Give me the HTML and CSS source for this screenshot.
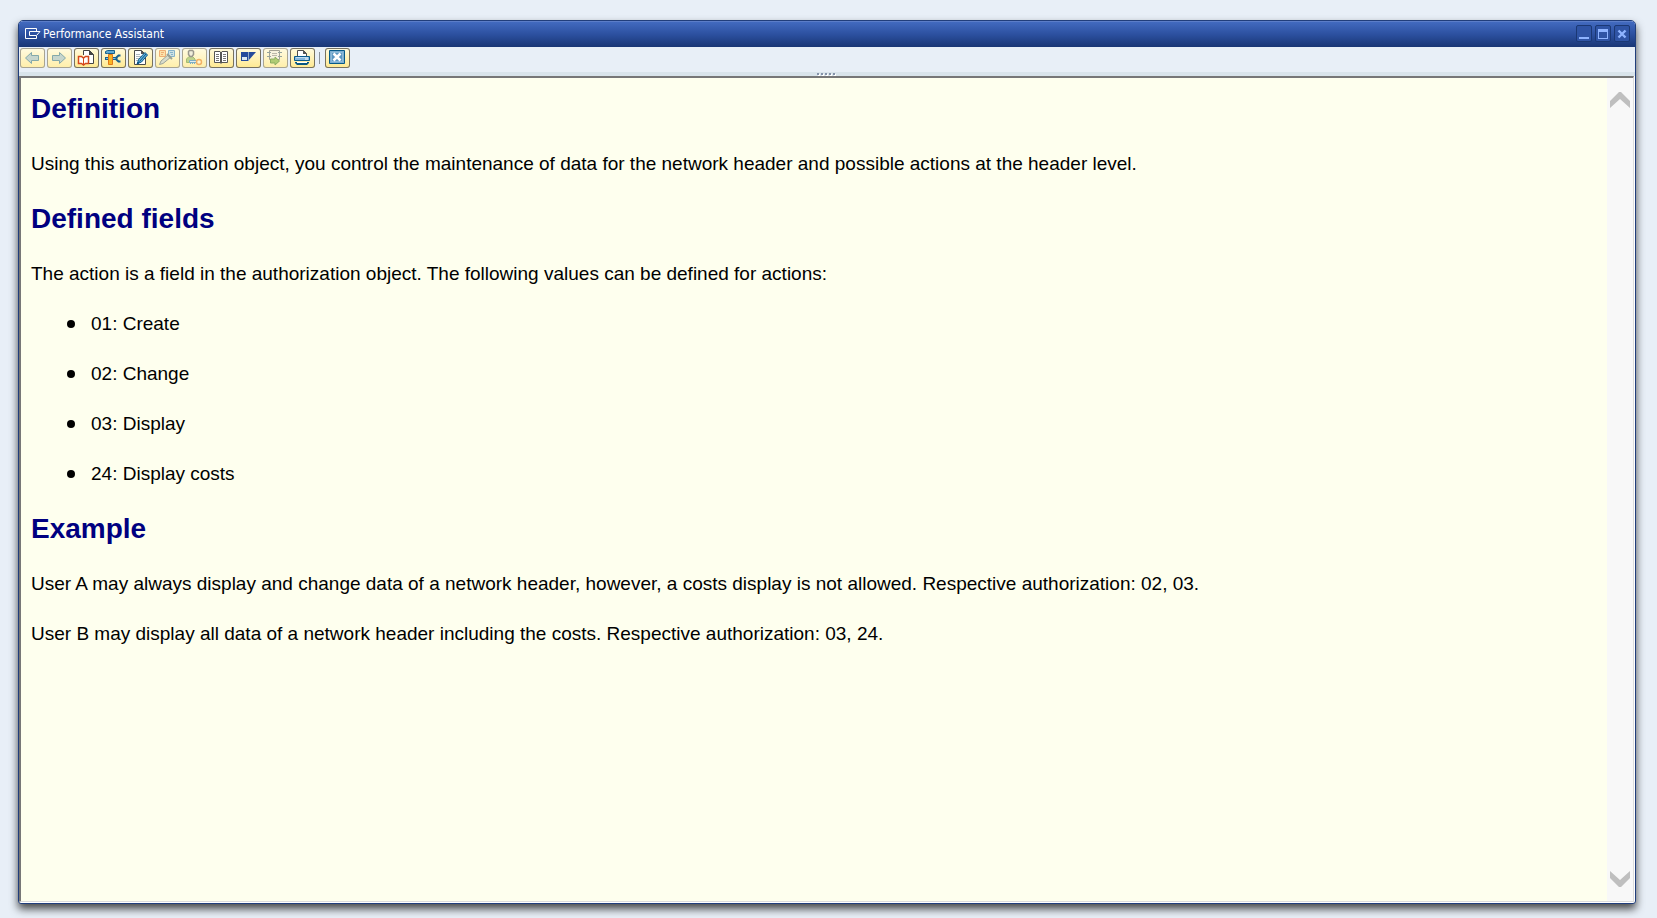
FILE: index.html
```html
<!DOCTYPE html>
<html lang="en">
<head>
<meta charset="utf-8">
<title>Performance Assistant</title>
<link rel="stylesheet" href="styles.css">
</head>
<body>
<div class="window">
  <header class="titlebar">
    <svg class="app-icon" width="16" height="12" viewBox="0 0 16 12" fill="none" stroke="#fff"><path d="M11.500 3V.5H.5v10h11V8M4.500 3.500H15L11.500 7.500H4.500z"/></svg>
    <h1 class="title">Performance Assistant</h1>
    <div class="controls">
      <button class="control" aria-label="Minimize"><svg width="14" height="14" viewBox="0 0 14 14"><path d="M2 10h10v2H2z" fill="#8fb4ff"/></svg></button>
      <button class="control" aria-label="Maximize"><svg width="14" height="14" viewBox="0 0 14 14"><path d="M2 2h10v10H2zM3 5v6h8V5z" fill="#8fb4ff" fill-rule="evenodd"/></svg></button>
      <button class="control" aria-label="Close"><svg width="14" height="14" viewBox="0 0 14 14"><path d="M3.500 3.500l7 7M10.500 3.500l-7 7" stroke="#8fb4ff" stroke-width="2.400"/></svg></button>
    </div>
  </header>
  <div class="toolbar" role="toolbar" aria-label="Help tools">
    <button class="tool" aria-label="Back" disabled><svg viewBox="0 0 25 20"><path d="M5.500 10L11.500 4.500V7.500H18.500V12.500H11.500V15.500z" fill="#c6d5cd" stroke="#84a9aa"/></svg></button>
    <button class="tool" aria-label="Forward" disabled><svg viewBox="0 0 25 20"><path d="M18.500 10L12.500 4.500V7.500H5.500V12.500H12.500V15.500z" fill="#c6d5cd" stroke="#84a9aa"/></svg></button>
    <button class="tool" aria-label="Application help"><svg viewBox="0 0 25 20"><path d="M9.500 7V2.500H15.500L19.500 6.500V15.500H15" fill="#fff" stroke="#444"/><path d="M15 2v5h5z" fill="#444"/><path d="M4.500 8.500H7.500L9.500 10L11.500 8.500H14.500V15.500H11.500L9.500 17L7.500 15.500H4.500z" fill="#fff" stroke="#d5481c" stroke-width="1.500"/><path d="M9.500 10v6" stroke="#d5481c"/></svg></button>
    <button class="tool" aria-label="Customizing"><svg viewBox="0 0 25 20"><path d="M4 10.500h12" stroke="#17618f" stroke-width="3"/><path d="M5 10.500h11" stroke="#7dbbe0"/><path d="M19.500 7.500H17.500L15.500 9.500V11.500L17.500 13.500H19.500" fill="none" stroke="#17618f" stroke-width="2"/><path d="M7.500 6.500h4v10h-4z" fill="#f8b523" stroke="#e07818"/><path d="M4.500 5.500V3.500L6.500 2.500H13.500V5.500H6.500z" fill="#5fa9d2" stroke="#15608d"/></svg></button>
    <button class="tool" aria-label="Edit note"><svg viewBox="0 0 25 20"><path d="M6.500 2.500H13.500L17.500 6.500V16.500H6.500z" fill="#fff" stroke="#4c4c4c"/><path d="M13 2v4h4z" fill="#555"/><path d="M8 6.500h4M8 8.500h6M8 10.500h4M8 12.500h2" stroke="#aeb7bd"/><path d="M9.500 15.500L10.500 11.500L17 4.500L19.500 7L13.500 14z" fill="#63afd5" stroke="#09588b"/><path d="M11.500 13.500L18 6M9 16l2-1-1-1z" stroke="#09588b"/></svg></button>
    <button class="tool" aria-label="Technical information" disabled><svg viewBox="0 0 25 20"><path d="M4.500 2.500h6v6h-6z" fill="#fce2aa" stroke="#efae75"/><path d="M6 4.500h3M6 6.500h2" stroke="#efae75"/><path d="M13.500 2.500h6v6h-6z" fill="#cde1e4" stroke="#86b2ca"/><path d="M15 4.500h3M16 6.500h2" stroke="#86b2ca"/><path d="M4.500 16.500L6 13L13.500 6.500L16 9L8 15.500z" fill="#d8dccc" stroke="#9da59a"/><path d="M12 6l5 5" stroke="#98a297" stroke-width="2"/></svg></button>
    <button class="tool" aria-label="User authorization" disabled><svg viewBox="0 0 25 20"><path d="M4.500 14.500V11L7 8.500H10.500L13 11V14.500z" fill="#bed28d" stroke="#a4bd71"/><path d="M6.500 3.500L7.500 2.500H10.500L11.500 3.500V6.500L10 8.500H8L6.500 6.500z" fill="#f1eedb" stroke="#99978c" stroke-width="1.500"/><path d="M7.500 12.500h7v2h-7z" fill="#e1ecec" stroke="#7baec6"/><path d="M8 15.500h1M10 15.500h1M12 15.500h1" stroke="#7baec6"/><circle cx="17" cy="14" r="2.500" fill="#fff5cf" stroke="#f2b266" stroke-width="1.500"/></svg></button>
    <button class="tool" aria-label="Glossary"><svg viewBox="0 0 25 20"><path d="M5.500 3.500H11L12 4.500L13 3.500H18.500V14.500H13L12 15.500L11 14.500H5.500z" fill="#fff" stroke="#555"/><path d="M12 4v11" stroke="#555" stroke-width="2"/><path d="M7 6.500h3M7 8.500h3M7 10.500h3M7 12.500h3M14 6.500h3M14 8.500h3M14 10.500h3M14 12.500h3" stroke="#777"/></svg></button>
    <button class="tool" aria-label="SAP site"><svg viewBox="0 0 25 20"><path d="M5 4h7v9H5z" fill="#254b9b"/><path d="M6 9h5v3H6z" fill="#dce9f2"/><path d="M12 4h8l-8 9z" fill="#254b9b"/><path d="M12.500 4v9" stroke="#8fa9c6"/></svg></button>
    <button class="tool" aria-label="Export" disabled><svg viewBox="0 0 25 20"><path d="M6.500 2.500h10v9h-10z" fill="#f7f3df" stroke="#a3a294"/><path d="M4 4.500h4M4 8.500h4M15 4.500h4M15 8.500h4" stroke="#95a49e"/><path d="M9 5.500h5M9 7.500h5" stroke="#bbb9aa"/><path d="M7.500 11v4h4.500v2l4.500-4-4.500-4v2z" fill="#b0cc74" stroke="#8caf60"/></svg></button>
    <button class="tool" aria-label="Print"><svg viewBox="0 0 25 20"><path d="M7.500 8V2.500H13.500L16.500 5.500V8" fill="#fff" stroke="#4e4e4e"/><path d="M13 2v4h4z" fill="#555"/><path d="M4.500 8.500h15v4h-15z" fill="#84b6dd" stroke="#09598c"/><path d="M6 9.500h12" stroke="#c2dcf0"/><path d="M15 11h3" stroke="#fff"/><path d="M7 14.500h10" stroke="#fff"/><path d="M5 14h2v1h10v-1h2v1l-2 2H7l-2-2z" fill="#075681"/></svg></button>
    <span class="separator"></span>
    <button class="tool" aria-label="Close help"><svg viewBox="0 0 25 20"><path d="M4.500 2.500h15v13h-15z" fill="#7caed2" stroke="#075a88"/><path d="M6.500 4.500h11v9h-11z" fill="#5b96c1" stroke="#8dbad8"/><path d="M8.500 5.500l7 7M15.500 5.500l-7 7" stroke="#fff" stroke-width="2.500"/></svg></button>
  </div>
  <div class="splitter"><svg width="20" height="4" viewBox="0 0 20 4"><path d="M1 2h2v2H1zM5 2h2v2H5zM9 2h2v2H9zM13 2h2v2h-2zM17 2h2v2h-2z" fill="#fff"/><path d="M0 1h2v2H0zM4 1h2v2H4zM8 1h2v2H8zM12 1h2v2h-2zM16 1h2v2h-2z" fill="#8593aa"/></svg></div>
  <div class="viewer">
    <main class="document">
      <h2>Definition</h2>
      <p>Using this authorization object, you control the maintenance of data for the network header and possible actions at the header level.</p>
      <h2>Defined fields</h2>
      <p>The action is a field in the authorization object. The following values can be defined for actions:</p>
      <ul>
        <li>01: Create</li>
        <li>02: Change</li>
        <li>03: Display</li>
        <li>24: Display costs</li>
      </ul>
      <h2>Example</h2>
      <p>User A may always display and change data of a network header, however, a costs display is not allowed. Respective authorization: 02, 03.</p>
      <p>User B may display all data of a network header including the costs. Respective authorization: 03, 24.</p>
    </main>
    <div class="scrollbar">
      <button class="scroll" aria-label="Scroll up"><svg width="20" height="16" viewBox="0 0 20 16"><path d="M0 9L9 0H11L20 9V16L10 7L0 16z" fill="#bfbfbf"/></svg></button>
      <button class="scroll" aria-label="Scroll down"><svg width="20" height="16" viewBox="0 0 20 16"><path d="M0 7L9 16H11L20 7V0L10 9L0 0z" fill="#bfbfbf"/></svg></button>
    </div>
  </div>
</div>
</body>
</html>
```
FILE: styles.css
```css
* { box-sizing: border-box; }

body {
  display: flex;
  min-height: 100vh;
  margin: 0;
  padding: 20px 21px 14px 18px;
  background: #e8eff7;
  font-family: "Liberation Sans", Arial, sans-serif;
}

button {
  display: flex;
  align-items: center;
  justify-content: center;
  padding: 0;
  border: 0;
  background: none;
}

.window {
  display: flex;
  flex: 1;
  flex-direction: column;
  min-width: 0;
  overflow: hidden;
  border: 1px solid #213e7b;
  border-radius: 5px 5px 3px 3px;
  background: #fff;
  box-shadow: 0 5px 8px rgba(0, 0, 0, 0.7);
}

.titlebar {
  display: flex;
  align-items: center;
  gap: 2px;
  height: 26px;
  padding: 0 5px 2px 6px;
  border-top: 1px solid #5b7dc8;
  background: linear-gradient(#426abf, #2c509f 50%, #193675);
}

.title {
  flex: 1;
  margin: 0;
  color: #fff;
  font: 12px/16px "DejaVu Sans Condensed", "DejaVu Sans", sans-serif;
}

.controls {
  display: flex;
  gap: 3px;
}

.control {
  width: 16px;
  height: 17px;
  border: 1px solid #1b3874;
  border-radius: 2px;
  background: #2f54a5;
}

.toolbar {
  display: flex;
  align-items: flex-start;
  gap: 2px;
  height: 25px;
  padding: 1px;
  background: #e8eff7;
}

.tool {
  width: 25px;
  height: 20px;
  border-radius: 3px;
  background: linear-gradient(#fffbe0, #ffe98f);
  box-shadow: inset 0 0 0 1px #76715f;
}

.tool:disabled {
  background: linear-gradient(#fffbe2, #ffeea8);
  box-shadow: inset 0 0 0 1px #a8a493;
}

.tool svg {
  width: 25px;
  height: 20px;
}

.separator {
  width: 1px;
  height: 12px;
  margin: 4px 3px 0 2px;
  background: #8c9299;
}

.splitter {
  display: flex;
  justify-content: center;
  height: 4px;
  background: #d9e4eb;
}

.viewer {
  display: flex;
  flex: 1;
  margin: 0 1px 1px 0;
  border: 1px solid #dcdcdc;
  border-top: 2px solid #777;
  border-left: 2px solid #777;
}

.document {
  flex: 1;
  padding: 15px 10px;
  background: #feffee;
  color: #000;
  font-size: 19px;
  line-height: 22px;
}

.document h2 {
  margin: 0 0 28px;
  color: #000080;
  font-size: 28px;
  line-height: 32px;
}

.document p,
.document li {
  margin: 0 0 28px;
}

.document ul {
  margin: 0;
  padding: 0 0 0 36px;
  list-style: none;
}

.document li {
  display: flex;
  align-items: center;
  gap: 16px;
}

.document li::before {
  width: 8px;
  height: 8px;
  border-radius: 50%;
  background: #000;
  content: "";
}

.scrollbar {
  display: flex;
  flex-direction: column;
  justify-content: space-between;
  width: 26px;
  padding: 14px 3px;
  background: #f8f8f8;
}

.scroll {
  width: 20px;
  height: 16px;
}
```
